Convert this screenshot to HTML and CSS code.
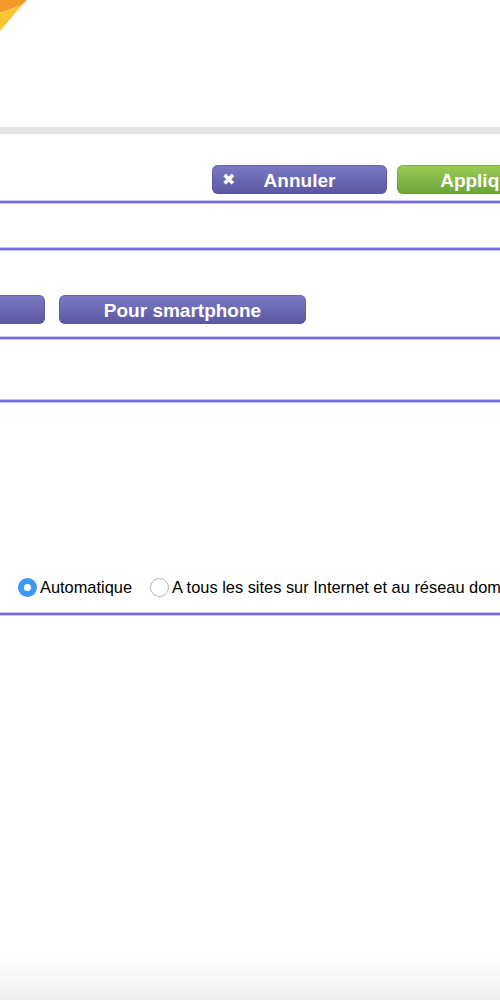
FILE: index.html
```html
<!DOCTYPE html>
<html lang="fr">
<head>
  <meta charset="UTF-8">
  <meta name="viewport" content="width=device-width, initial-scale=1.0">
  <title>Paramètres</title>
  <link rel="stylesheet" href="styles.css">
</head>
<body>

<div class="header">
  <svg class="logo" width="30" height="32" viewBox="0 0 30 32">
    <polygon points="0,0 27,0 22,5 0,13" fill="#f49a2b"/>
    <polygon points="0,13 22,5 0,31" fill="#fcc42e"/>
  </svg>
</div>
<div class="gray-bar"></div>

<div class="toolbar">
  <button type="button" class="btn btn-cancel"><span class="btn-icon">&#x2716;</span>Annuler</button>
  <button type="button" class="btn btn-apply">Appliquer</button>
</div>
<div class="rule"></div>

<div class="section section-empty"></div>
<div class="rule"></div>

<div class="section section-buttons">
  <button type="button" class="btn btn-mode btn-first">Pour ordinateur</button>
  <button type="button" class="btn btn-mode">Pour smartphone</button>
</div>
<div class="rule"></div>

<div class="section section-short"></div>
<div class="rule"></div>

<div class="section section-radios">
  <label class="radio">
    <span class="radio-mark checked"></span>Automatique
  </label>
  <label class="radio">
    <span class="radio-mark"></span>A tous les sites sur Internet et au réseau domestique
  </label>
</div>
<div class="rule"></div>

</body>
</html>
```

FILE: styles.css
```css
body {
  margin: 0;
  padding: 0;
  width: 500px;
  height: 1000px;
  overflow: hidden;
  font-family: 'Liberation Sans', Arial, sans-serif;
  background: linear-gradient(to bottom, #fff 0, #fff 955px, #efefef 1000px);
}

.header {
  height: 127px;
}

.logo {
  display: block;
}

.gray-bar {
  height: 7px;
  background: #e4e4e4;
}

.rule {
  height: 2px;
  background: #7471dc;
  box-shadow: 0 -1px 0 #c6c4f2, 0 1px 0 #c6c4f2;
}

.toolbar {
  display: flex;
  gap: 10px;
  padding: 31px 0 7px 212px;
  white-space: nowrap;
}

.btn {
  position: relative;
  flex: none;
  height: 29px;
  width: 175px;
  padding: 2px 0 0;
  border: none;
  border-radius: 6px;
  color: #fff;
  font-family: 'Liberation Sans', Arial, sans-serif;
  font-weight: bold;
  font-size: 19px;
  text-align: center;
  cursor: pointer;
}

.btn-cancel,
.btn-mode {
  background: linear-gradient(to bottom, #7c7ac6, #5b57a1);
  box-shadow: inset 0 0 0 1px rgba(80, 76, 150, 0.4);
}

.btn-apply {
  background: linear-gradient(to bottom, #9bcc55, #6da33a);
  box-shadow: inset 0 0 0 1px rgba(90, 140, 40, 0.4);
}

.btn-icon {
  position: absolute;
  left: 10px;
  top: 5px;
  font-family: 'DejaVu Sans', sans-serif;
  font-size: 16px;
}

.section {
  display: flex;
  white-space: nowrap;
}

.section-empty {
  height: 45px;
}

.section-buttons {
  gap: 14px;
  padding: 45px 0 13px;
}

.btn-mode {
  width: 247px;
}

.btn-first {
  margin-left: -202px;
}

.section-short {
  height: 61px;
}

.section-radios {
  gap: 18px;
  height: 211px;
  box-sizing: border-box;
  align-items: flex-end;
  padding: 0 0 16px 18px;
}

.radio {
  display: flex;
  align-items: center;
  gap: 3px;
  font-size: 16.4px;
  color: #000;
}

.radio-mark {
  box-sizing: border-box;
  width: 19px;
  height: 19px;
  border-radius: 50%;
  border: 1px solid #b5b5b5;
  background: #fff;
}

.radio-mark.checked {
  border: 6.5px solid #3d97f7;
  background: #fff;
}
```
